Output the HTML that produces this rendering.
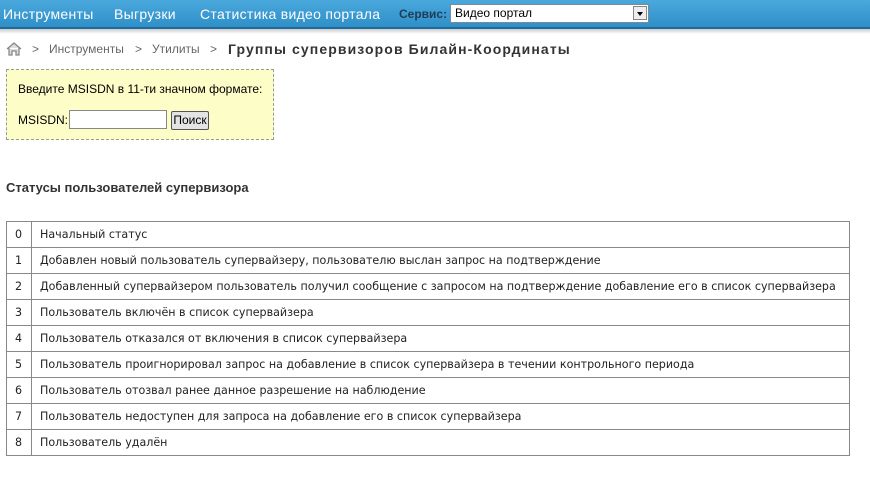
<!DOCTYPE html>
<html><head><meta charset="utf-8"><style>
body{margin:0;width:870px;height:480px;background:#fff;font-family:"Liberation Sans",sans-serif;position:relative;overflow:hidden}
.bar{position:absolute;left:0;top:0;width:870px;height:27px;background:linear-gradient(#4aa8dc,#2f8fc8);border-bottom:2px solid #1f6a99}
.shadow{position:absolute;left:0;top:29px;width:870px;height:5px;background:linear-gradient(#ccc,#fff)}
.nav{position:absolute;top:6px;color:#fff;font-size:14px;letter-spacing:0.3px}
.sv{position:absolute;left:399px;top:7px;font-size:12px;font-weight:bold;color:#1f3d55}
.sel{position:absolute;left:450px;top:4px;width:197px;height:17px;background:#fff;border:1px solid #7a8a99;font-size:12px;line-height:17px}
.sel span{padding-left:4px}
.arr{position:absolute;right:1px;top:1px;width:14px;height:14px;border:1px solid #888;background:#eee;box-sizing:border-box}
.arr:after{content:"";position:absolute;left:3px;top:5px;border:3px solid transparent;border-top:4px solid #000}
.bc{position:absolute;top:42px;font-size:12px;color:#666}
.title{position:absolute;left:228px;top:41px;font-size:14px;font-weight:bold;color:#333;letter-spacing:1.1px}
.box{position:absolute;left:6px;top:69px;width:266px;height:69px;background:#fdfdc8;border:1px dashed #999;font-size:12px}
.box input{position:absolute;left:62px;top:40px;width:96px;height:17px;border:1px solid #888;padding:0;margin:0}
h3{position:absolute;left:6px;top:180px;margin:0;font-size:13px;color:#333}
table{position:absolute;left:6px;top:221px;width:844px;border-collapse:collapse;font-family:"DejaVu Sans",sans-serif;font-size:11.1px;color:#222}
td{border:1px solid #888;height:25px;padding:0 8px;white-space:nowrap}
td:first-child{width:8px;}
</style></head><body>
<div class="bar"></div><div class="shadow"></div>
<div class="nav" style="left:3px">Инструменты</div>
<div class="nav" style="left:114px">Выгрузки</div>
<div class="nav" style="left:200px">Статистика видео портала</div>
<div class="sv">Сервис:</div>
<div class="sel"><span>Видео портал</span><div class="arr"></div></div>
<svg style="position:absolute;left:6px;top:42px" width="16" height="14" viewBox="0 0 16 14"><path d="M1 7 L8 1 L15 7 M3 6 V13 H6 V9 H10 V13 H13 V6" fill="#ddd" stroke="#888" stroke-width="1.3"/></svg>
<div class="bc" style="left:32px">&gt;</div>
<div class="bc" style="left:49px">Инструменты</div>
<div class="bc" style="left:135px">&gt;</div>
<div class="bc" style="left:152px">Утилиты</div>
<div class="bc" style="left:210px">&gt;</div>
<div class="title">Группы супервизоров Билайн-Координаты</div>
<div class="box">
<div style="position:absolute;left:11px;top:12px">Введите MSISDN в 11-ти значном формате:</div>
<div style="position:absolute;left:11px;top:43px">MSISDN:</div>
<input type="text">
<div style="position:absolute;left:164px;top:41px;width:36px;height:17px;border:1px solid #555;background:#e4e4e4;border-radius:2px;font-size:12px;line-height:17px;text-align:center">Поиск</div>
</div>
<h3>Статусы пользователей супервизора</h3>
<table>
<tr><td>0</td><td>Начальный статус</td></tr>
<tr><td>1</td><td>Добавлен новый пользователь супервайзеру, пользователю выслан запрос на подтверждение</td></tr>
<tr><td>2</td><td>Добавленный супервайзером пользователь получил сообщение с запросом на подтверждение добавление его в список супервайзера</td></tr>
<tr><td>3</td><td>Пользователь включён в список супервайзера</td></tr>
<tr><td>4</td><td>Пользователь отказался от включения в список супервайзера</td></tr>
<tr><td>5</td><td>Пользователь проигнорировал запрос на добавление в список супервайзера в течении контрольного периода</td></tr>
<tr><td>6</td><td>Пользователь отозвал ранее данное разрешение на наблюдение</td></tr>
<tr><td>7</td><td>Пользователь недоступен для запроса на добавление его в список супервайзера</td></tr>
<tr><td>8</td><td>Пользователь удалён</td></tr>
</table>
</body></html>
